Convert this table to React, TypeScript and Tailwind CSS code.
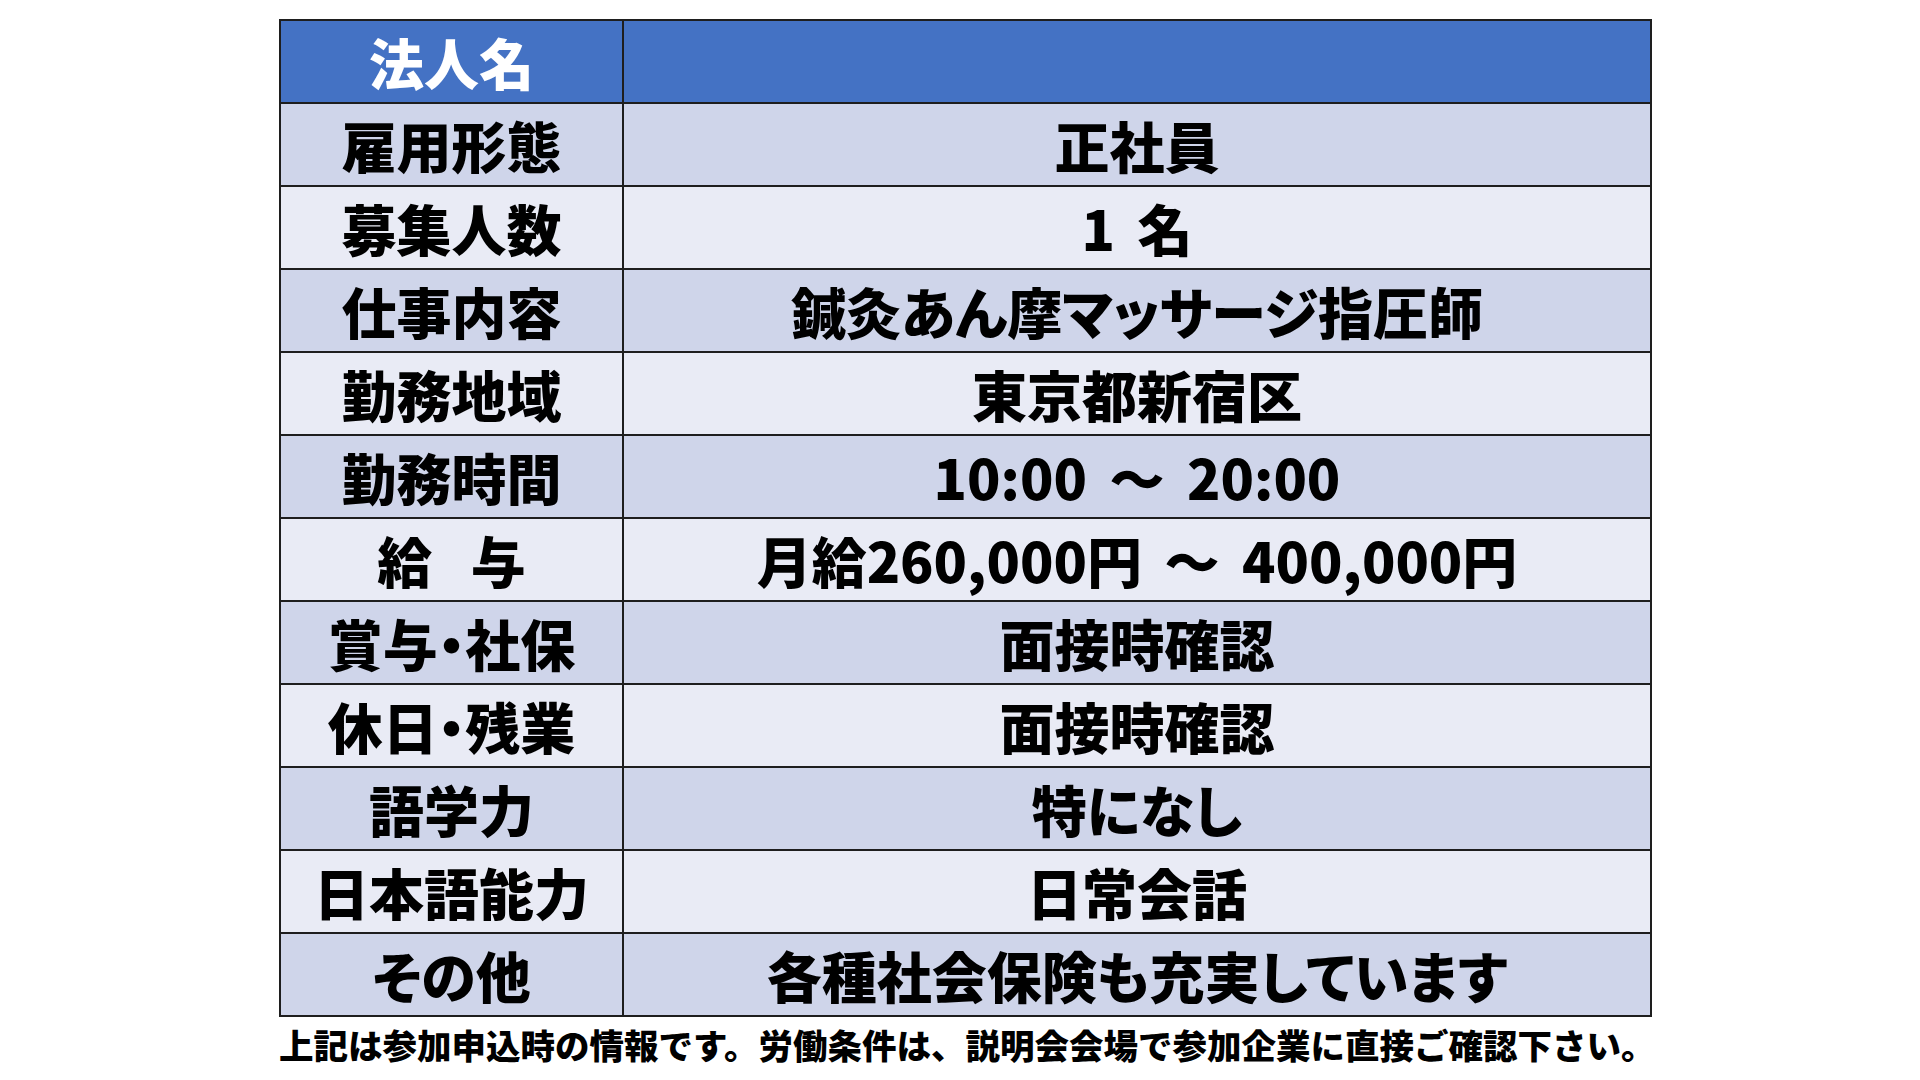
const rows: [string, string][] = [
  ["雇用形態", "正社員"],
  ["募集人数", "1 名"],
  ["仕事内容", "鍼灸あん摩マッサージ指圧師"],
  ["勤務地域", "東京都新宿区"],
  ["勤務時間", "10:00 ～ 20:00"],
  ["給 与", "月給260,000円 ～ 400,000円"],
  ["賞与・社保", "面接時確認"],
  ["休日・残業", "面接時確認"],
  ["語学力", "特になし"],
  ["日本語能力", "日常会話"],
  ["その他", "各種社会保険も充実しています"],
];

const font = "font-['Noto_Sans_CJK_JP','Noto_Sans_CJK_SC',sans-serif] font-black";

export default function App() {
  return (
    <div className={`w-[1920px] h-[1080px] bg-white pt-[19px] pl-[279px] ${font}`}>
      {/* table */}
      <div className="w-[1373px] grid grid-cols-[341px_1026px] gap-[2px] p-[2px] bg-[#1e1e1e] [font-feature-settings:'palt']">
        <div className="h-[81px] bg-[#4472c4] flex items-center justify-center text-white text-[55px] leading-none">
          法人名
        </div>
        <div className="h-[81px] bg-[#4472c4]" />
        {rows.map(([label, value], i) => {
          const bg = i % 2 === 0 ? "bg-[#cfd5ea]" : "bg-[#e9ebf5]";
          return [
            <div
              key={label + "-l"}
              className={`h-[81px] ${bg} flex items-center justify-center text-black text-[55px] leading-none [word-spacing:26px]`}
            >
              {label}
            </div>,
            <div
              key={label + "-v"}
              className={`h-[81px] ${bg} flex items-center justify-center text-black text-[55px] leading-none [word-spacing:10px]`}
            >
              {value}
            </div>,
          ];
        })}
      </div>

      {/* note */}
      <p className="mt-[10px] text-[34.5px] leading-none text-black">
        上記は参加申込時の情報です。労働条件は、説明会会場で参加企業に直接ご確認下さい。
      </p>
    </div>
  );
}
